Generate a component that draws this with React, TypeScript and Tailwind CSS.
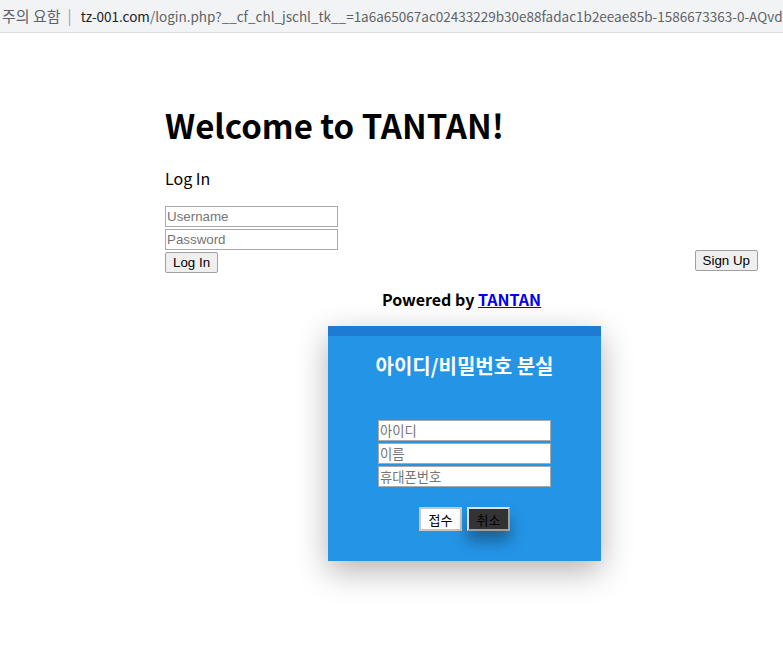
import React from "react";

export default function App() {
  const ko = { fontFamily: '"Noto Sans CJK KR", "Noto Sans", sans-serif' };
  const arial = { fontFamily: '"Liberation Sans", Arial, sans-serif' };
  return (
    <div className="w-[783px] h-[651px] bg-white overflow-hidden" style={ko}>
      <div className="h-[33px] bg-[#f1f3f4] border-b border-[#dadce0] flex items-center pl-[2px] text-[15px] whitespace-nowrap overflow-hidden">
        <span className="text-[#5f6368]">주의 요함</span>
        <span className="text-[#9aa0a6] ml-[7px] mr-[9px]">|</span>
        <span className="text-[13.5px]">
          <span className="text-[#202124]">tz-001.com</span>
          <span className="text-[#5f6368]">/login.php?__cf_chl_jschl_tk__=1a6a65067ac02433229b30e88fadac1b2eeae85b-1586673363-0-AQvd</span>
        </span>
      </div>
      <div className="pl-[165px] pr-[25px]">
        <h1 className="text-[33px] font-bold leading-[38px] mt-[73px] text-black">Welcome to TANTAN!</h1>
        <div className="text-[16px] leading-[20px] mt-[24px] text-black">Log In</div>
        <div className="mt-[18px] flex flex-col gap-[2px]" style={arial}>
          <input placeholder="Username" className="w-[173px] h-[21px] border border-[#a9a9a9] px-[1px] text-[13.33px] placeholder:text-[#757575] outline-none" />
          <input placeholder="Password" className="w-[173px] h-[21px] border border-[#a9a9a9] px-[1px] text-[13.33px] placeholder:text-[#757575] outline-none" />
        </div>
        <div className="flex justify-between items-start" style={arial}>
          <button className="mt-[2px] h-[21px] px-[7px] text-[13.33px] bg-[#efefef] border border-[#a0a0a0] rounded-[2px] leading-none">Log In</button>
          <button className="h-[21px] px-[7px] text-[13.33px] bg-[#efefef] border border-[#a0a0a0] rounded-[2px] leading-none">Sign Up</button>
        </div>
        <div className="text-center font-bold text-[16px] leading-[20px] mt-[16px] text-black">
          Powered by <a href="#" className="text-[#0000ee] underline">TANTAN</a>
        </div>
        <div className="ml-[163px] mt-[17px] w-[273px] h-[235px] bg-[#2494e6] shadow-[0_10px_30px_rgba(0,0,0,0.3)] border-t-[10px] border-[#1e7bd4] flex flex-col items-center">
          <div className="text-white font-bold text-[20px] leading-[24px] mt-[18px]">아이디/비밀번호 분실</div>
          <div className="mt-[42px] flex flex-col gap-[2px]">
            <input placeholder="아이디" className="w-[173px] h-[21px] border border-[#a9a9a9] bg-white px-[1px] text-[13.33px] placeholder:text-[#757575] outline-none" />
            <input placeholder="이름" className="w-[173px] h-[21px] border border-[#a9a9a9] bg-white px-[1px] text-[13.33px] placeholder:text-[#757575] outline-none" />
            <input placeholder="휴대폰번호" className="w-[173px] h-[21px] border border-[#a9a9a9] bg-white px-[1px] text-[13.33px] placeholder:text-[#757575] outline-none" />
          </div>
          <div className="mt-[20px] flex gap-[5px]">
            <button className="w-[43px] h-[24px] bg-white border-2 border-[#c8c8c8] text-[13px] text-black leading-none">접수</button>
            <button className="w-[43px] h-[24px] bg-[#333333] border-2 border-t-[#e0e0e0] border-l-[#e0e0e0] border-r-[#a0a0a0] border-b-[#a0a0a0] text-[13px] text-black leading-none shadow-[0_10px_15px_rgba(0,0,0,0.35)]">취소</button>
          </div>
        </div>
      </div>
    </div>
  );
}
